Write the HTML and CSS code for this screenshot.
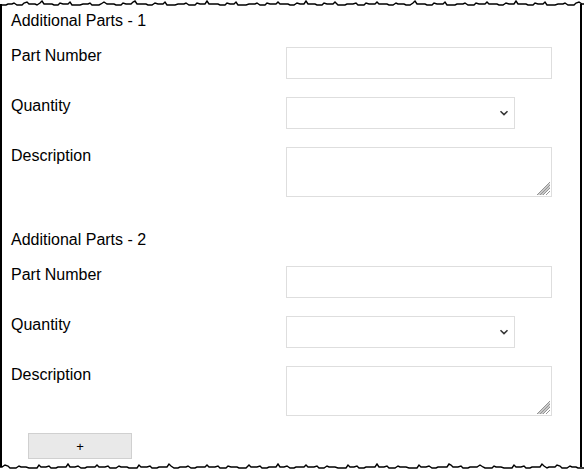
FILE: index.html
```html
<!DOCTYPE html>
<html>
<head>
<meta charset="utf-8">
<link rel="stylesheet" href="styles.css">
</head>
<body>
<div class="page">
  <svg class="frame" width="584" height="472" viewBox="0 0 584 472">
    <defs>
      <path id="torn-edge" d="M0 5 L6 5 L8 4 L12 4 L14 3 L17 5 L22 5 L24 3 L27 2 L29 4 L35 4 L37 5 L40 3 L42 1 L44 4 L52 4 L54 5 L58 5 L60 3 L63 4 L68 4 L70 2 L72 5 L80 5 L83 4 L88 4 L90 3 L92 5 L99 5 L101 4 L104 2 L107 4 L114 4 L116 5 L121 5 L123 3 L126 4 L131 4 L133 2 L135 1 L137 4 L146 4 L148 5 L152 5 L155 3 L158 4 L163 4 L165 2 L167 5 L175 5 L178 4 L184 4 L186 3 L189 5 L195 5 L197 3 L200 4 L205 4 L207 1 L209 4 L218 4 L220 5 L225 5 L227 3 L230 4 L234 4 L236 2 L238 5 L246 5 L249 4 L255 4 L257 3 L260 5 L265 5 L267 3 L270 4 L276 4 L278 2 L280 4 L288 4 L290 5 L294 5 L297 3 L300 4 L304 4 L306 1 L308 4 L315 4 L317 5 L322 5 L324 3 L327 4 L333 4 L335 2 L338 5 L345 5 L347 4 L353 4 L356 3 L358 5 L364 5 L366 3 L369 4 L375 4 L377 2 L379 4 L387 4 L389 5 L393 5 L396 3 L398 4 L404 4 L406 5 L410 5 L413 3 L415 1 L417 4 L425 4 L427 5 L432 5 L434 3 L437 4 L443 4 L445 2 L447 5 L455 5 L457 4 L463 4 L465 3 L468 5 L474 5 L476 3 L479 4 L485 4 L487 2 L489 4 L497 4 L499 5 L503 5 L506 3 L509 4 L514 4 L516 1 L518 4 L526 4 L528 5 L533 5 L535 3 L538 4 L543 4 L545 2 L547 5 L555 5 L558 4 L563 4 L565 3 L568 5 L574 5 L576 3 L579 2 L582 4 L584 4"/>
    </defs>
    <line x1="1" y1="4" x2="1" y2="467" stroke="#000" stroke-width="2"/>
    <line x1="581" y1="4" x2="581" y2="467" stroke="#000" stroke-width="2"/>
    <use href="#torn-edge" fill="none" stroke="#000" stroke-width="1.4"/>
    <use href="#torn-edge" fill="none" stroke="#000" stroke-width="1.4" transform="translate(584 463) scale(-1 1)"/>
  </svg>

  <section class="part">
    <h2 class="part-title">Additional Parts - 1</h2>
    <div class="row"><label class="field-label">Part Number</label><input class="field-input" type="text"></div>
    <div class="row"><label class="field-label">Quantity</label>
      <span class="select-wrap"><select class="field-select"><option></option></select>
        <svg class="chevron" width="10" height="6" viewBox="0 0 10 6"><path d="M1.5 1.2 L5 4.6 L8.5 1.2" fill="none" stroke="#333" stroke-width="1.5"/></svg>
      </span>
    </div>
    <div class="row"><label class="field-label">Description</label>
      <span class="area-wrap"><textarea class="field-area"></textarea>
        <svg class="grip" width="13" height="13" viewBox="0 0 13 13"><path d="M13 0 L0 13 M13 3 L3 13 M13 6 L6 13 M13 9 L9 13 M13 1.5 L1.5 13 M13 4.5 L4.5 13" stroke="#7a7a7a" stroke-width="0.8"/></svg>
      </span>
    </div>
  </section>

  <section class="part">
    <h2 class="part-title">Additional Parts - 2</h2>
    <div class="row"><label class="field-label">Part Number</label><input class="field-input" type="text"></div>
    <div class="row"><label class="field-label">Quantity</label>
      <span class="select-wrap"><select class="field-select"><option></option></select>
        <svg class="chevron" width="10" height="6" viewBox="0 0 10 6"><path d="M1.5 1.2 L5 4.6 L8.5 1.2" fill="none" stroke="#333" stroke-width="1.5"/></svg>
      </span>
    </div>
    <div class="row"><label class="field-label">Description</label>
      <span class="area-wrap"><textarea class="field-area"></textarea>
        <svg class="grip" width="13" height="13" viewBox="0 0 13 13"><path d="M13 0 L0 13 M13 3 L3 13 M13 6 L6 13 M13 9 L9 13 M13 1.5 L1.5 13 M13 4.5 L4.5 13" stroke="#7a7a7a" stroke-width="0.8"/></svg>
      </span>
    </div>
  </section>

  <button class="add-btn" type="button">+</button>
</div>
</body>
</html>
```
FILE: styles.css
```css
html, body {
  margin: 0;
  padding: 0;
  background: #fff;
}
body {
  font-family: "Liberation Sans", Arial, sans-serif;
  font-size: 16px;
  color: #000;
}
.page {
  position: relative;
  display: flex;
  flex-direction: column;
  align-items: flex-start;
  width: 584px;
  height: 472px;
  box-sizing: border-box;
  padding: 12px 0 0 11px;
  overflow: hidden;
}
.frame {
  position: absolute;
  left: 0;
  top: 0;
  pointer-events: none;
}
.part {
  display: flex;
  flex-direction: column;
  gap: 18px;
}
.part + .part {
  margin-top: 34px;
}
.part-title {
  margin: 0 0 -1px;
  font-size: 16px;
  font-weight: normal;
  line-height: 18px;
}
.row {
  display: grid;
  grid-template-columns: 275px auto;
  align-items: start;
}
.field-label {
  line-height: 18px;
  padding-top: 0;
}
.field-input,
.field-select,
.field-area {
  box-sizing: border-box;
  border: 1px solid #dedede;
  background: #fff;
  margin: 0;
  font-family: inherit;
  font-size: 14px;
  border-radius: 0;
  outline: none;
}
.field-input {
  width: 266px;
  height: 32px;
}
.select-wrap {
  position: relative;
  display: block;
  width: 229px;
  height: 32px;
}
.field-select {
  appearance: none;
  -webkit-appearance: none;
  width: 229px;
  height: 32px;
}
.chevron {
  position: absolute;
  right: 6px;
  top: 13px;
}
.area-wrap {
  position: relative;
  display: block;
  width: 266px;
  height: 50px;
}
.field-area {
  display: block;
  width: 266px;
  height: 50px;
  resize: none;
}
.grip {
  position: absolute;
  right: 2px;
  bottom: 2px;
}
.add-btn {
  display: block;
  margin: 17px 0 0 17px;
  width: 104px;
  height: 26px;
  background: #e9e9e9;
  border: 1px solid #d0d0d0;
  border-radius: 0;
  font-family: "Liberation Sans", Arial, sans-serif;
  font-size: 13px;
  color: #000;
  padding: 0;
}
```
